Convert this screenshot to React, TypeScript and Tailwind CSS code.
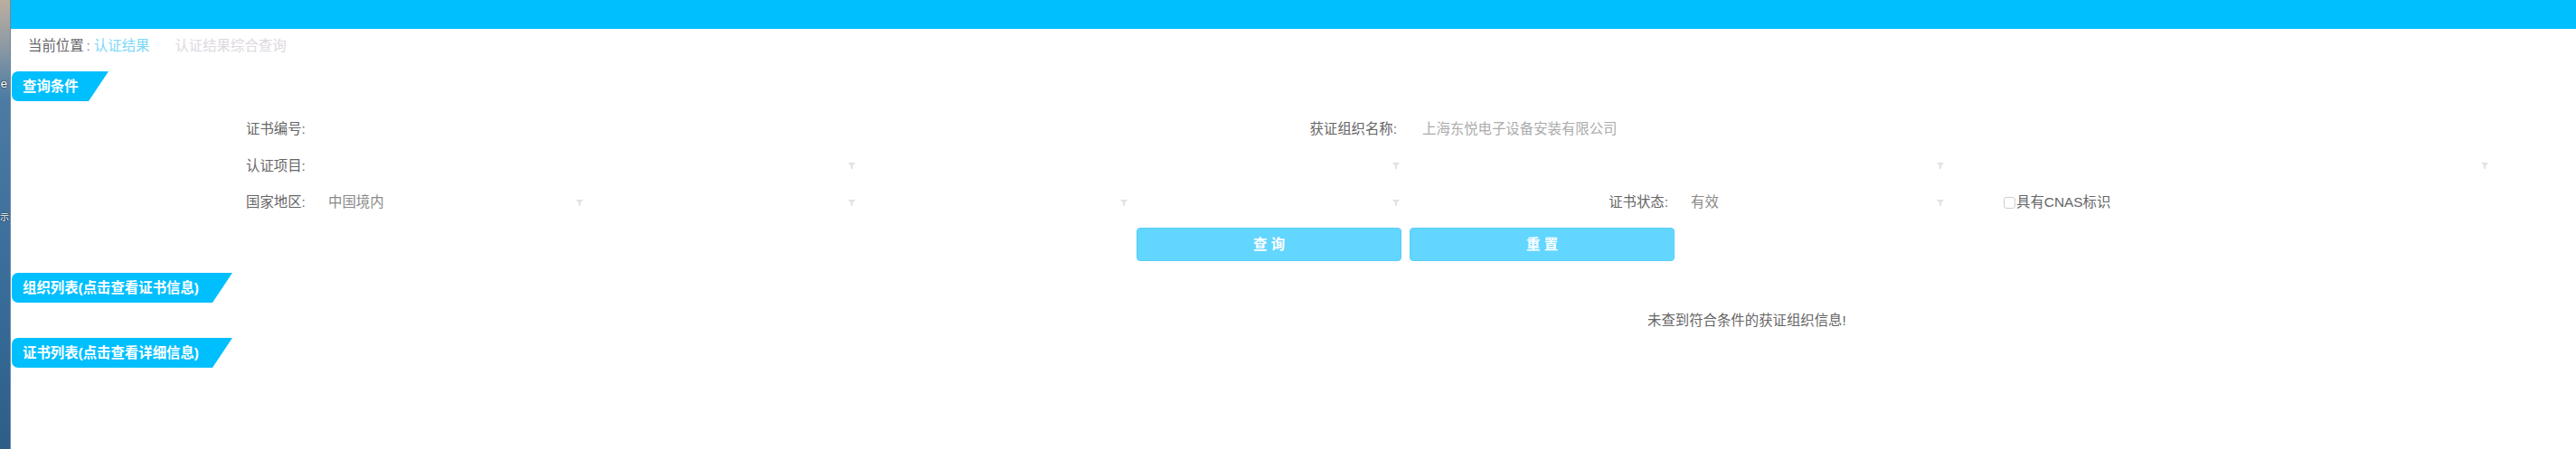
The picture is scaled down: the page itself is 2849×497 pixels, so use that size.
import React from "react";

const UNIT = "w-[301px]";

function Arrow() {
  return (
    <svg width="8" height="7" viewBox="0 0 8 7" aria-hidden className="shrink-0">
      <path d="M0 0H8L5 3.5V7H3V3.5Z" fill="#e2e2e2" />
    </svg>
  );
}

function Select({ text, wide, textPad = "pl-2" }: { text?: string; wide?: boolean; textPad?: string }) {
  return (
    <div
      className={`flex h-full shrink-0 items-center justify-between pr-[11px] ${textPad} ${
        wide ? "w-[602px]" : UNIT
      }`}
    >
      <span className="text-[#8a8a8a]">{text}</span>
      <Arrow />
    </div>
  );
}

function Tab({ title, width }: { title: string; width: string }) {
  return (
    <div
      className={`ml-[1px] flex h-[33px] items-center rounded-l-[7px] bg-[#00bfff] pl-[12px] text-[15.4px] font-bold text-white [clip-path:polygon(0_0,100%_0,calc(100%-22px)_100%,0_100%)] ${width}`}
    >
      {title}
    </div>
  );
}

function Label({ children }: { children: React.ReactNode }) {
  return <div className="w-[83px] shrink-0 text-[#666]">{children}</div>;
}

export default function App() {
  return (
    <div className="flex h-[497px] w-[2849px] overflow-hidden bg-white font-['Liberation_Sans','Noto_Sans_CJK_SC',sans-serif] text-[15.4px] leading-none">
      {/* desktop edge behind the window */}
      <div className="relative flex h-full w-[12px] shrink-0 flex-col bg-[linear-gradient(180deg,#bcae9f_0%,#8f9aa3_10%,#4c7ba3_22%,#3f719d_50%,#356894_75%,#2d5e88_100%)]">
        <div className="mt-[86px] flex h-[16px] justify-end pr-[4px] text-[13px] text-white [text-shadow:0_0_2px_#000]">
          e
        </div>
        <div className="mt-[134px] flex h-[16px] justify-end pr-[2px] text-[10px] text-white [text-shadow:0_0_2px_#000]">
          示
        </div>
        <div className="absolute inset-y-0 right-0 w-[1px] bg-[#6d8aa3]" />
      </div>

      <div className="flex min-w-0 flex-1 flex-col">
        <div className="h-[32px] shrink-0 bg-[#00bfff]" />

        <div className="flex h-[38px] items-center pl-[19px] whitespace-nowrap">
          <span className="text-[#666]">当前位置</span>
          <span className="ml-[3px] text-[#8a7aa0]">:</span>
          <span className="ml-[4px] text-[#7ad8f6]">认证结果</span>
          <span className="ml-[28px] text-[#ddd8e0]">认证结果综合查询</span>
        </div>

        <div className="mt-[9px]">
          <Tab title="查询条件" width="w-[107px]" />
        </div>

        <div className="mt-[11px] ml-[260px] flex flex-col whitespace-nowrap">
          <div className="flex h-[40px] items-center">
            <Label>证书编号:</Label>
            <div className="w-[904px] shrink-0" />
            <div className={`${UNIT} shrink-0 pr-[15px] text-right text-[#666]`}>获证组织名称:</div>
            <div className="w-[602px] shrink-0 pl-[13px] text-[#ababab]">上海东悦电子设备安装有限公司</div>
          </div>

          <div className="flex h-[41px] items-center">
            <Label>认证项目:</Label>
            <Select wide />
            <Select wide />
            <Select wide />
            <Select wide />
          </div>

          <div className="flex h-[40px] items-center">
            <Label>国家地区:</Label>
            <Select text="中国境内" />
            <Select />
            <Select />
            <Select />
            <div className={`${UNIT} shrink-0 pr-[15px] text-right text-[#666]`}>证书状态:</div>
            <Select text="有效" textPad="pl-[10px]" />
            <label className="ml-[55px] flex items-center text-[#666]">
              <span className="mr-[1px] inline-block h-[13px] w-[13px] rounded-[3px] border border-[#cfcfcf] bg-white" />
              具有CNAS标识
            </label>
          </div>
        </div>

        <div className="mt-[8px] flex gap-[9px] pl-[1245px]">
          <button className="h-[37px] w-[293px] rounded-[4px] border border-[#58cdf8] bg-[#63d6ff] text-[15.4px] font-bold text-white">
            查 询
          </button>
          <button className="h-[37px] w-[293px] rounded-[4px] border border-[#58cdf8] bg-[#63d6ff] text-[15.4px] font-bold text-white">
            重 置
          </button>
        </div>

        <div className="mt-[13px]">
          <Tab title="组织列表(点击查看证书信息)" width="w-[244px]" />
        </div>

        <div className="flex h-[39px] items-center pl-[1810px] text-[#666]">
          未查到符合条件的获证组织信息!
        </div>

        <div>
          <Tab title="证书列表(点击查看详细信息)" width="w-[244px]" />
        </div>
      </div>
    </div>
  );
}
